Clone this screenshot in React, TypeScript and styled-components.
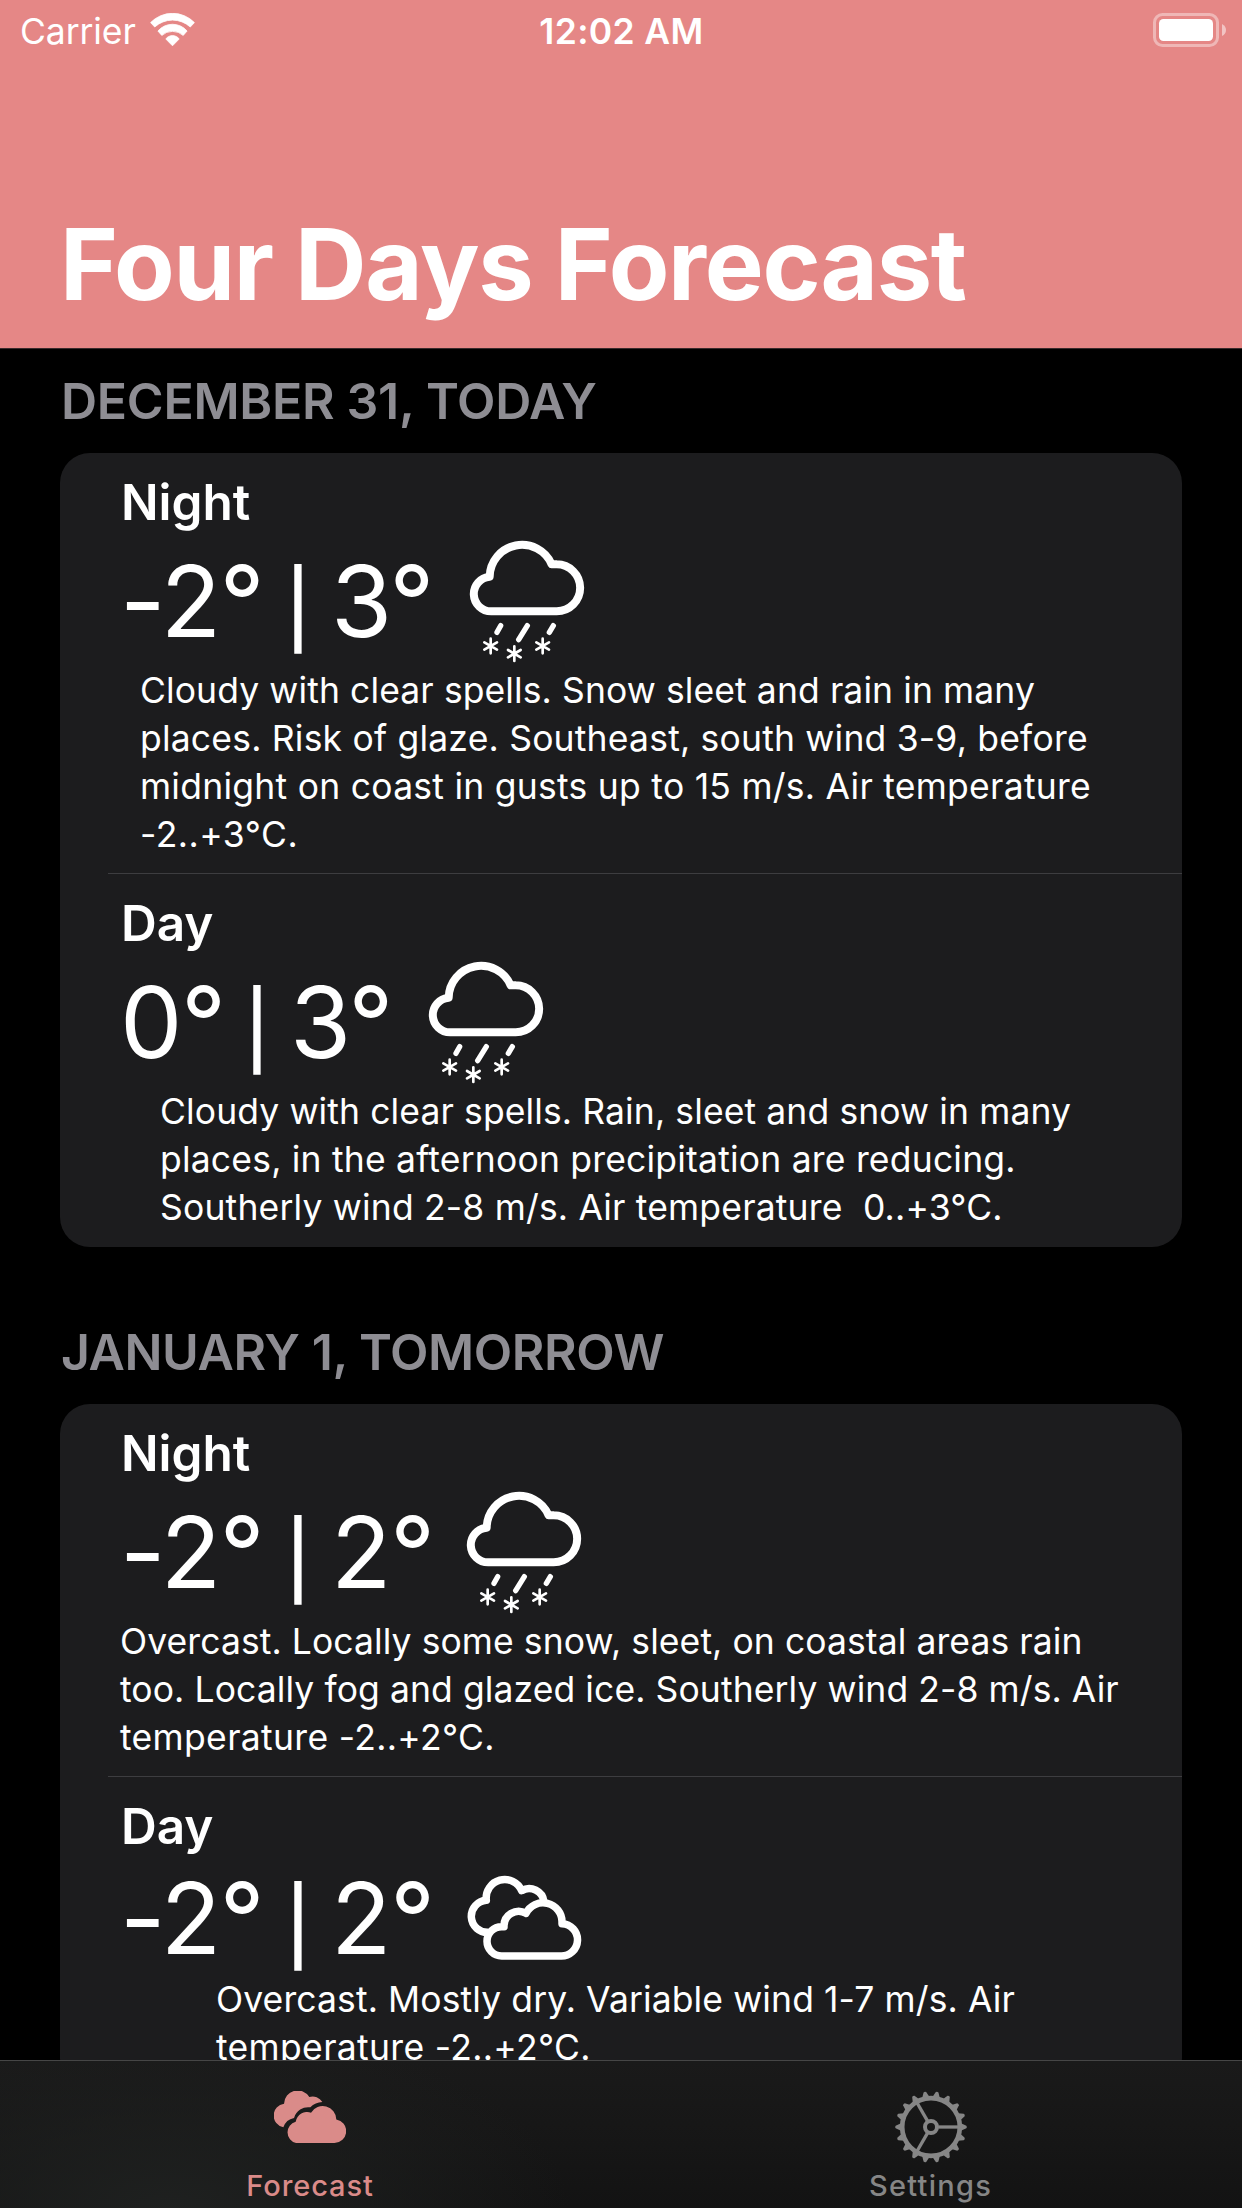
import React from "react";
import styled, { createGlobalStyle } from "styled-components";

const GlobalStyle = createGlobalStyle`
  * { box-sizing: border-box; }
  body { margin: 0; background: #000; }
`;

const Screen = styled.div`
  width: 1242px;
  height: 2208px;
  display: flex;
  flex-direction: column;
  overflow: hidden;
  background: #000;
  color: #fff;
  font-family: Inter, "Liberation Sans", sans-serif;
`;

const Header = styled.header`
  height: 349px;
  flex: none;
  display: flex;
  flex-direction: column;
  background: #e58786;
  border-bottom: 1px solid #3a2a2b;
`;

const StatusBar = styled.div`
  height: 60px;
  padding: 0 16px 0 20px;
  display: grid;
  grid-template-columns: 1fr auto 1fr;
  font-size: 35.5px;
  line-height: 64px;
`;

const StatusLeft = styled.div`
  display: flex;
  align-items: flex-start;
  gap: 14px;

  svg { margin-top: 13px; }
`;

const Carrier = styled.span`
  width: 116px;
  white-space: nowrap;
  letter-spacing: -0.1px;
`;

const Clock = styled.span`
  margin-right: 3px;
  font-weight: 600;
  letter-spacing: 0.35px;
`;

const StatusRight = styled.div`
  display: flex;
  justify-content: flex-end;

  svg { margin-top: 13px; }
`;

const Title = styled.h1`
  margin: auto 0 25px;
  padding-left: 60px;
  font-size: 99px;
  line-height: 118px;
  font-weight: 700;
  letter-spacing: -1.25px;
  white-space: nowrap;
`;

const List = styled.main`
  flex: 1;
  min-height: 0;
  overflow: hidden;
  padding: 0 60px;
  font-feature-settings: "calt" 0;
`;

const SectionTitle = styled.h2<{ $tracking: number }>`
  margin: 0;
  height: 104px;
  padding: 22px 0 0 1px;
  font-size: 50px;
  line-height: 61px;
  font-weight: 600;
  letter-spacing: ${(p) => p.$tracking}px;
  color: #8e8d93;
  white-space: nowrap;
`;

const Section = styled.section`
  margin-bottom: 53px;
`;

const Card = styled.div`
  padding-bottom: 1px;
  border-radius: 30px;
  background: #1c1c1e;
  overflow: hidden;
`;

const Entry = styled.article`
  padding: 19px 0 14px 60px;
`;

const Divider = styled.div`
  height: 1px;
  margin-left: 48px;
  background: #3d3d40;
`;

const Period = styled.h3`
  margin: 0;
  padding-left: 1px;
  font-size: 49.5px;
  line-height: 61px;
  font-weight: 600;
`;

const Temperatures = styled.div<{ $height: number }>`
  display: flex;
  align-items: center;
  height: ${(p) => p.$height}px;
  padding-top: 2px;
  font-size: 99px;
  line-height: 118px;

  svg { flex: none; overflow: visible; }
`;

const Degrees = styled.span<{ $width: number }>`
  width: ${(p) => p.$width}px;
  flex: none;
  white-space: nowrap;
  letter-spacing: -1.5px;
`;

const Bar = styled.span`
  width: 68px;
  flex: none;
  margin-right: -1px;
  padding-top: 16px;
  font-size: 75px;
  line-height: 90px;
  font-weight: 550;
  text-align: center;
`;

const Summary = styled.p<{ $indent: number }>`
  margin: 0;
  padding-left: ${(p) => p.$indent}px;
  font-size: 35.5px;
  line-height: 48px;
  white-space: pre;
`;

const Line = styled.span<{ $tracking: number }>`
  display: block;
  letter-spacing: ${(p) => p.$tracking}px;
`;

const TabBar = styled.nav`
  flex: none;
  height: 148px;
  display: grid;
  grid-template-columns: 620px 621px;
  border-top: 1px solid #464646;
  background:
    radial-gradient(ellipse 400px 190px at 170px 150px, #1f2120 0%, rgba(31, 33, 32, 0) 100%),
    linear-gradient(180deg, #1a1a1a 0%, #131313 100%);
`;

const Tab = styled.div<{ $active?: boolean }>`
  display: flex;
  flex-direction: column;
  align-items: center;
  padding-top: 30px;
  color: ${(p) => (p.$active ? "#da8b89" : "#868686")};
`;

const TabIcon = styled.div`
  height: 77px;
`;

const TabLabel = styled.span<{ $tracking: number }>`
  font-size: 29px;
  line-height: 36px;
  font-weight: 500;
  letter-spacing: ${(p) => p.$tracking}px;
`;

const Wifi = () => (
  <svg width="46" height="34" viewBox="0 0 46 34" fill="#fff" stroke="#fff" strokeWidth="0.8" strokeLinejoin="round">
    <path d="M0.6 9.6A30.5 30.5 0 0 1 44.4 9.6L40.3 14A26.4 26.4 0 0 0 4.7 14Z" />
    <path d="M7.9 18A19.2 19.2 0 0 1 37.1 18L33.2 22.4A16.2 16.2 0 0 0 11.8 22.4Z" />
    <path d="M15.8 26A8.3 8.3 0 0 1 29.2 26L22.5 32.8Z" />
  </svg>
);

const Battery = () => (
  <svg width="73" height="34" viewBox="0 0 73 34">
    <rect x="1.5" y="1.5" width="63" height="31" rx="8" fill="none" stroke="#fff" strokeOpacity="0.4" strokeWidth="3" />
    <rect x="6" y="6" width="54" height="22" rx="4.5" fill="#fff" />
    <path d="M69 11Q73 13 73 17Q73 21 69 23Z" fill="#fff" fillOpacity="0.5" />
  </svg>
);

const Flake = ({ x, y }: { x: number; y: number }) => (
  <path d={`M${x} ${y - 22}V${y + 22}M${x - 19} ${y - 11}L${x + 19} ${y + 11}M${x - 19} ${y + 11}L${x + 19} ${y - 11}`} strokeWidth="8" />
);

const Sleet = () => (
  <svg width="114" height="122" viewBox="90 59 342 366" fill="none" stroke="#fff" strokeLinecap="round" strokeLinejoin="round">
    <path
      strokeWidth="24"
      d="M154 273H350A70.5 70.5 0 0 0 350 132Q342 131 335 132A97 97 0 0 0 149 169A52.1 52.1 0 0 0 154 273Z"
    />
    <path strokeWidth="16" d="M182 316L171 336M262 316L236 358M340 316L328 336" />
    <Flake x={152} y={377} />
    <Flake x={223} y={400} />
    <Flake x={308} y={377} />
  </svg>
);

const Clouds = () => (
  <svg width="113.7" height="84" viewBox="81 75 341 252" fill="none" stroke="#fff" strokeWidth="22.5" strokeLinejoin="round">
    <path d="M185 315H362A48.5 48.5 0 0 0 366 218L366 213A57 57 0 0 0 258 187A44 44 0 0 0 192 227.5L185 227A44 44 0 0 0 185 315Z" />
    <path d="M145 244A48 48 0 0 1 139 148A55.5 55.5 0 0 1 245 119A45 45 0 0 1 312 152" />
  </svg>
);

const CloudsFilled = () => (
  <svg width="72.7" height="52.3" viewBox="102 122 218 157" fill="currentColor">
    <path d="M168 278H283.5A35.5 35.5 0 0 0 289 207.5A41 41 0 0 0 213 187A35 35 0 0 0 167 214A33 33 0 0 0 168 278Z" />
    <path d="M130 231A36 36 0 0 1 132 160A41 41 0 0 1 208 140A34 34 0 0 1 247 155A52 52 0 0 0 211 171A44 44 0 0 0 162 203A42 42 0 0 0 130 231Z" />
  </svg>
);

const TEETH = Array.from({ length: 18 }, (_, i) => i * 20);

const Gear = () => (
  <svg width="72" height="72" viewBox="-108 -108 216 216" fill="none" stroke="currentColor">
    <circle r="86.5" strokeWidth="14" />
    <circle r="18" strokeWidth="12" />
    {[0, 120, 240].map((a) => (
      <path key={a} d="M22 0H84" strokeWidth="10" transform={`rotate(${a})`} />
    ))}
    {TEETH.map((a) => (
      <path key={a} d="M90 -11L106 -4Q109 0 106 4L90 11Z" fill="currentColor" stroke="none" transform={`rotate(${a})`} />
    ))}
  </svg>
);

type Forecast = {
  period: string;
  low: string;
  high: string;
  sky: "sleet" | "clouds";
  indent: number;
  lines: [text: string, tracking: number][];
};

const DAYS: { title: string; tracking: number; entries: Forecast[] }[] = [
  {
    title: "DECEMBER 31, TODAY",
    tracking: -0.28,
    entries: [
      {
        period: "Night", low: "-2°", high: "3°", sky: "sleet", indent: 20,
        lines: [
          ["Cloudy with clear spells. Snow sleet and rain in many", 0.1],
          ["places. Risk of glaze. Southeast, south wind 3-9, before", 0.2],
          ["midnight on coast in gusts up to 15 m/s. Air temperature", 0.26],
          ["-2..+3°C.", 0.5],
        ],
      },
      {
        period: "Day", low: "0°", high: "3°", sky: "sleet", indent: 40,
        lines: [
          ["Cloudy with clear spells. Rain, sleet and snow in many", 0.11],
          ["places, in the afternoon precipitation are reducing.", 0.2],
          ["Southerly wind 2-8 m/s. Air temperature  0..+3°C.", 0.18],
        ],
      },
    ],
  },
  {
    title: "JANUARY 1, TOMORROW",
    tracking: -0.42,
    entries: [
      {
        period: "Night", low: "-2°", high: "2°", sky: "sleet", indent: 0,
        lines: [
          ["Overcast. Locally some snow, sleet, on coastal areas rain", 0.08],
          ["too. Locally fog and glazed ice. Southerly wind 2-8 m/s. Air", 0.09],
          ["temperature -2..+2°C.", 0.33],
        ],
      },
      {
        period: "Day", low: "-2°", high: "2°", sky: "clouds", indent: 96,
        lines: [
          ["Overcast. Mostly dry. Variable wind 1-7 m/s. Air", 0.11],
          ["temperature -2..+2°C.", 0.33],
        ],
      },
    ],
  },
];

const LOW_WIDTH: Record<string, number> = { "-2°": 144, "0°": 103 };
const HIGH_WIDTH: Record<string, number> = { "3°": 139, "2°": 136 };

export default function App() {
  return (
    <Screen>
      <GlobalStyle />
      <Header>
        <StatusBar>
          <StatusLeft>
            <Carrier>Carrier</Carrier>
            <Wifi />
          </StatusLeft>
          <Clock>12:02 AM</Clock>
          <StatusRight>
            <Battery />
          </StatusRight>
        </StatusBar>
        <Title>Four Days Forecast</Title>
      </Header>
      <List>
        {DAYS.map((day) => (
          <Section key={day.title}>
            <SectionTitle $tracking={day.tracking}>{day.title}</SectionTitle>
            <Card>
              {day.entries.map((e, i) => (
                <React.Fragment key={e.period}>
                  {i > 0 && <Divider />}
                  <Entry>
                    <Period>{e.period}</Period>
                    <Temperatures $height={e.sky === "sleet" ? 134 : 119}>
                      <Degrees $width={LOW_WIDTH[e.low]}>{e.low}</Degrees>
                      <Bar>|</Bar>
                      <Degrees $width={HIGH_WIDTH[e.high]}>{e.high}</Degrees>
                      {e.sky === "sleet" ? <Sleet /> : <Clouds />}
                    </Temperatures>
                    <Summary $indent={e.indent}>
                      {e.lines.map(([text, tracking]) => (
                        <Line key={text} $tracking={tracking}>{text}</Line>
                      ))}
                    </Summary>
                  </Entry>
                </React.Fragment>
              ))}
            </Card>
          </Section>
        ))}
      </List>
      <TabBar>
        <Tab $active>
          <TabIcon>
            <CloudsFilled />
          </TabIcon>
          <TabLabel $tracking={0.9}>Forecast</TabLabel>
        </Tab>
        <Tab>
          <TabIcon>
            <Gear />
          </TabIcon>
          <TabLabel $tracking={1.25}>Settings</TabLabel>
        </Tab>
      </TabBar>
    </Screen>
  );
}
